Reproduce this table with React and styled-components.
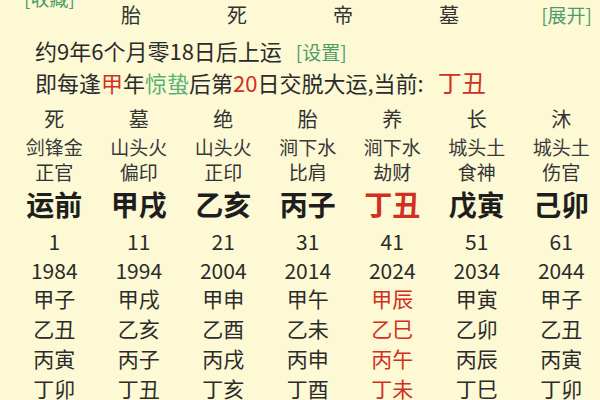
import styled, { createGlobalStyle } from 'styled-components';

const GlobalStyle = createGlobalStyle`
  html, body {
    margin: 0;
    padding: 0;
    background: #fcf9d4;
  }
  body {
    font-family: "Noto Sans CJK SC", "Noto Sans", sans-serif;
    color: #2b2b2b;
  }
`;

const Page = styled.div`
  width: 600px;
  height: 400px;
  overflow: hidden;
  background: #fcf9d4;
`;

const TopBar = styled.div`
  display: grid;
  grid-template-columns: 78px repeat(4, 106px) 1fr;
  align-items: start;
  height: 30px;
`;

const Link = styled.span`
  font-size: 19px;
  line-height: 30px;
  color: #4e9d69;
  white-space: nowrap;
  ${(p) => (p.$cut ? 'margin-top: -17px; padding-left: 24px;' : '')}
  ${(p) => (p.$right ? 'justify-self: end; padding-right: 8px;' : '')}
`;

const Stage = styled.span`
  font-size: 20px;
  line-height: 30px;
  text-align: center;
  color: #333;
`;

const InfoLine = styled.div`
  padding-left: 35px;
  font-size: 22px;
  line-height: 31px;
  height: 31px;
  white-space: nowrap;
  color: #2b2b2b;
  ${(p) => (p.$first ? 'margin-top: 5px;' : '')}
`;

const Setting = styled.span`
  font-size: 19px;
  color: #4e9d69;
  margin-left: 14px;
`;

const Red = styled.span`
  color: #d22f24;
`;

const Current = styled.span`
  color: #d22f24;
  font-size: 24px;
  margin-left: 14px;
`;

const Green = styled.span`
  color: #58b277;
`;

const Table = styled.div`
  margin-top: 8px;
  padding-left: 12px;
`;

const Row = styled.div`
  display: grid;
  grid-template-columns: repeat(7, 84.5px);
  height: ${(p) => p.$h}px;
  line-height: ${(p) => p.$h}px;
  font-size: ${(p) => p.$size}px;
  font-weight: ${(p) => (p.$bold ? 700 : 400)};
  color: ${(p) => p.$color || '#2b2b2b'};
`;

const Cell = styled.div`
  text-align: center;
  white-space: nowrap;
  color: ${(p) => (p.$red ? '#d22f24' : 'inherit')};
`;

const columns = [
  { stage: '死', nayin: '剑锋金', god: '正官', gz: '运前', age: 1, year: 1984, years: ['甲子', '乙丑', '丙寅', '丁卯'] },
  { stage: '墓', nayin: '山头火', god: '偏印', gz: '甲戌', age: 11, year: 1994, years: ['甲戌', '乙亥', '丙子', '丁丑'] },
  { stage: '绝', nayin: '山头火', god: '正印', gz: '乙亥', age: 21, year: 2004, years: ['甲申', '乙酉', '丙戌', '丁亥'] },
  { stage: '胎', nayin: '涧下水', god: '比肩', gz: '丙子', age: 31, year: 2014, years: ['甲午', '乙未', '丙申', '丁酉'] },
  { stage: '养', nayin: '涧下水', god: '劫财', gz: '丁丑', age: 41, year: 2024, years: ['甲辰', '乙巳', '丙午', '丁未'], current: true },
  { stage: '长', nayin: '城头土', god: '食神', gz: '戊寅', age: 51, year: 2034, years: ['甲寅', '乙卯', '丙辰', '丁巳'] },
  { stage: '沐', nayin: '城头土', god: '伤官', gz: '己卯', age: 61, year: 2044, years: ['甲子', '乙丑', '丙寅', '丁卯'] },
];

const App = () => {
  return (
    <Page>
      <GlobalStyle />
      <TopBar>
        <Link $cut>[收藏]</Link>
        <Stage>胎</Stage>
        <Stage>死</Stage>
        <Stage>帝</Stage>
        <Stage>墓</Stage>
        <Link $right>[展开]</Link>
      </TopBar>
      <InfoLine $first>
        约9年6个月零18日后上运
        <Setting>[设置]</Setting>
      </InfoLine>
      <InfoLine>
        即每逢<Red>甲</Red>年<Green>惊蛰</Green>后第<Red>20</Red>日交脱大运,当前:
        <Current>丁丑</Current>
      </InfoLine>
      <Table>
        <Row $h={28} $size={20} $color="#333">
          {columns.map((c, i) => (
            <Cell key={i}>{c.stage}</Cell>
          ))}
        </Row>
        <Row $h={28} $size={19} $color="#3a3a3a">
          {columns.map((c, i) => (
            <Cell key={i}>{c.nayin}</Cell>
          ))}
        </Row>
        <Row $h={22} $size={19} $color="#333">
          {columns.map((c, i) => (
            <Cell key={i}>{c.god}</Cell>
          ))}
        </Row>
        <Row $h={42} $size={28} $bold $color="#1e1e1e">
          {columns.map((c, i) => (
            <Cell key={i} $red={c.current}>
              {c.gz}
            </Cell>
          ))}
        </Row>
        <Row $h={32} $size={21}>
          {columns.map((c, i) => (
            <Cell key={i}>{c.age}</Cell>
          ))}
        </Row>
        <Row $h={26} $size={21}>
          {columns.map((c, i) => (
            <Cell key={i}>{c.year}</Cell>
          ))}
        </Row>
        {[0, 1, 2, 3].map((r) => (
          <Row key={r} $h={30} $size={21}>
            {columns.map((c, i) => (
              <Cell key={i} $red={c.current}>
                {c.years[r]}
              </Cell>
            ))}
          </Row>
        ))}
      </Table>
    </Page>
  );
};

export default App;
